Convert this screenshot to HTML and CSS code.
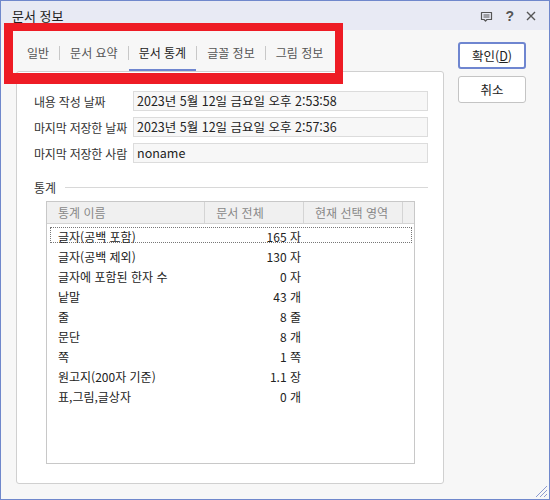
FILE: index.html
```html
<!DOCTYPE html>
<html lang="ko">
<head>
<meta charset="utf-8">
<title>문서 정보</title>
<link rel="stylesheet" href="styles.css">
</head>
<body>
<div class="window">
  <div class="titlebar">
    <span class="title">문서 정보</span>
    <div class="tb-icons">
      <svg class="tb-comment" width="13" height="11" viewBox="0 0 13 11">
        <path d="M1.5 1.5h10v7h-4.5l-1.5 1.5-1.5-1.5h-2.5z" fill="none" stroke="#555" stroke-width="1.2" stroke-linejoin="round"/>
        <path d="M3.5 4h6M3.5 6h6" stroke="#555" stroke-width="1.1"/>
      </svg>
      <span class="tb-help">?</span>
      <svg class="tb-close" width="10" height="10" viewBox="0 0 10 10">
        <path d="M1 1l8 8M9 1l-8 8" stroke="#555" stroke-width="1.4"/>
      </svg>
    </div>
  </div>
  <div class="body">
    <div class="main">
      <div class="tabs">
        <div class="tab">일반</div>
        <span class="sep"></span>
        <div class="tab">문서 요약</div>
        <span class="sep"></span>
        <div class="tab active">문서 통계</div>
        <span class="sep"></span>
        <div class="tab">글꼴 정보</div>
        <span class="sep"></span>
        <div class="tab">그림 정보</div>
      </div>
      <div class="panel">
        <div class="fields">
          <div class="label">내용 작성 날짜</div>
          <div class="value">2023년 5월 12일 금요일 오후 2:53:58</div>
          <div class="label">마지막 저장한 날짜</div>
          <div class="value">2023년 5월 12일 금요일 오후 2:57:36</div>
          <div class="label">마지막 저장한 사람</div>
          <div class="value">noname</div>
        </div>
        <div class="section">
          <span class="section-title">통계</span>
          <span class="section-line"></span>
        </div>
        <div class="table">
          <div class="thead">
            <div class="th th-name">통계 이름</div>
            <div class="th th-doc">문서 전체</div>
            <div class="th th-sel">현재 선택 영역</div>
            <div class="th th-fill"></div>
          </div>
          <div class="rows">
            <div class="row focus"><span class="c-name">글자(공백 포함)</span><span class="c-val">165 자</span><span></span></div>
            <div class="row"><span class="c-name">글자(공백 제외)</span><span class="c-val">130 자</span><span></span></div>
            <div class="row"><span class="c-name">글자에 포함된 한자 수</span><span class="c-val">0 자</span><span></span></div>
            <div class="row"><span class="c-name">낱말</span><span class="c-val">43 개</span><span></span></div>
            <div class="row"><span class="c-name">줄</span><span class="c-val">8 줄</span><span></span></div>
            <div class="row"><span class="c-name">문단</span><span class="c-val">8 개</span><span></span></div>
            <div class="row"><span class="c-name">쪽</span><span class="c-val">1 쪽</span><span></span></div>
            <div class="row"><span class="c-name">원고지(200자 기준)</span><span class="c-val">1.1 장</span><span></span></div>
            <div class="row"><span class="c-name">표,그림,글상자</span><span class="c-val">0 개</span><span></span></div>
          </div>
        </div>
      </div>
    </div>
    <div class="buttons">
      <button class="btn default">확인(<u>D</u>)</button>
      <button class="btn">취소</button>
    </div>
  </div>
  <div class="annot"></div>
  <svg class="grip" width="14" height="14" viewBox="0 0 14 14">
    <path d="M13 2L2 13M13 6L6 13M13 10L10 13" stroke="#8c9bd0" stroke-width="1"/>
  </svg>
</div>
</body>
</html>
```

FILE: styles.css
```css
* { box-sizing: border-box; }
html, body { margin: 0; padding: 0; }
body {
  font-family: "Noto Sans CJK KR", "Noto Sans", sans-serif;
  font-size: 12px;
  color: #222;
  background: #f7f7f7;
}
.window {
  position: relative;
  width: 550px;
  height: 500px;
  border: 1px solid #7088cc;
  background: #f7f7f7;
  display: flex;
  flex-direction: column;
}
.titlebar {
  height: 29px;
  background: #e8eaf4;
  display: flex;
  align-items: center;
  justify-content: space-between;
  padding: 0 13px 0 11px;
}
.title { font-size: 13px; color: #222; }
.tb-icons { display: flex; align-items: center; gap: 12px; }
.tb-comment { margin-top: 1px; }
.tb-help { font-family: "Liberation Sans", sans-serif; font-weight: bold; font-size: 14px; color: #555; }
.body {
  flex: 1;
  display: flex;
  padding: 0 23px 15px 15px;
  gap: 14px;
}
.main { width: 428px; display: flex; flex-direction: column; }
.tabs {
  display: flex;
  align-items: center;
  padding-top: 6px;
  height: 41px;
}
.tab {
  height: 35px;
  display: flex;
  align-items: center;
  padding: 0 10px;
  border-bottom: 2px solid transparent;
  color: #555;
  font-size: 12px;
  white-space: nowrap;
}
.tab:first-child { padding-left: 11px; }
.tab.active { border-bottom-color: #6f86d0; color: #222; }
.sep { width: 1px; height: 14px; background: #c8c8c8; margin-top: -2px; }
.panel {
  flex: 1;
  background: #fff;
  border: 1px solid #d0d0d0;
  border-radius: 3px;
  padding: 19px 15px 19px 17px;
  display: flex;
  flex-direction: column;
}
.fields {
  display: grid;
  grid-template-columns: 99px 1fr;
  row-gap: 6px;
  align-items: center;
}
.label { font-size: 12px; letter-spacing: -0.2px; color: #333; white-space: nowrap; }
.value {
  height: 20px;
  background: #f7f7f7;
  border: 1px solid #dcdcdc;
  padding: 0 3px;
  font-size: 12.5px;
  line-height: 18px;
  color: #222;
}
.section {
  display: flex;
  align-items: center;
  margin-top: 14px;
  height: 20px;
  gap: 9px;
}
.section-title { font-size: 12px; color: #333; }
.section-line { flex: 1; height: 1px; background: #d8d8d8; }
.table {
  margin: 4px 13px 0 12px;
  flex: 1;
  border: 1px solid #c8c8c8;
  display: flex;
  flex-direction: column;
}
.thead {
  display: flex;
  height: 22px;
  background: #f0f0f0;
  border-bottom: 1px solid #d4d4d4;
}
.th {
  color: #888;
  font-size: 12px;
  line-height: 21px;
  padding-left: 11px;
  border-right: 1px solid #d4d4d4;
}
.th-name { width: 160px; }
.th-doc { width: 100px; }
.th-sel { width: 100px; }
.th-fill { flex: 1; border-right: 0; }
.rows {
  display: flex;
  flex-direction: column;
  padding: 1px 2px 0 3px;
  gap: 4px;
}
.rows .row:first-child { margin-top: 2px; }
.row {
  display: grid;
  grid-template-columns: 155px 100px 1fr;
  height: 16px;
  border: 1px dotted transparent;
  align-items: center;
  font-size: 12px;
  color: #222;
}
.row.focus { border-color: #777; }
.c-name { padding-left: 7px; white-space: nowrap; }
.c-val { text-align: right; padding-right: 5px; white-space: nowrap; }
.buttons {
  padding-top: 12px;
  display: flex;
  flex-direction: column;
  gap: 7px;
  width: 68px;
}
.btn {
  height: 27px;
  width: 68px;
  background: #fff;
  border: 1px solid #c4c4c4;
  border-radius: 3px;
  font-family: inherit;
  font-size: 12.5px;
  color: #222;
  padding: 0;
}
.btn.default { border: 2px solid #6f86d0; }
.annot {
  position: absolute;
  left: 3px;
  top: 22px;
  width: 339px;
  height: 61px;
  border-style: solid;
  border-color: #ee1c25;
  border-width: 8px 8px 11px 9px;
  pointer-events: none;
}
.grip { position: absolute; right: 1px; bottom: 1px; }
```
